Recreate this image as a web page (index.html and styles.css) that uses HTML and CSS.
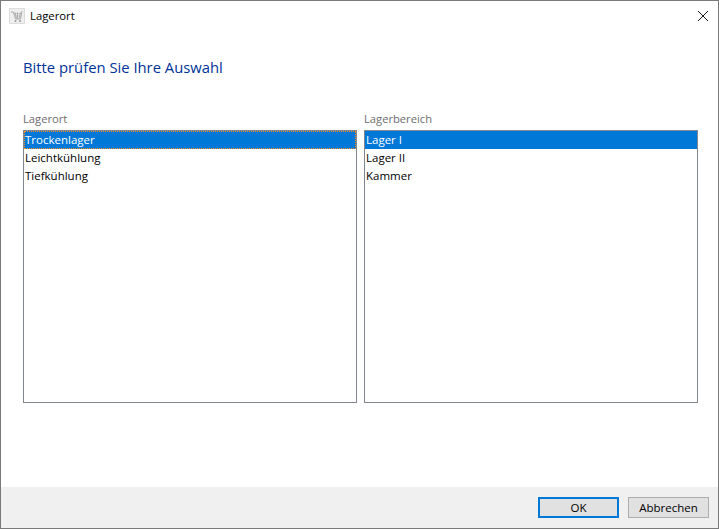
FILE: index.html
```html
<!DOCTYPE html>
<html lang="de">
<head>
<meta charset="utf-8">
<title>Lagerort</title>
<link rel="stylesheet" href="styles.css">
</head>
<body>
<div class="window">
  <header class="titlebar">
    <span class="app-icon">
      <svg width="16" height="16" viewBox="0 0 16 16">
        <rect x="0.5" y="0.5" width="15" height="15" fill="#eeeeee" stroke="#dddddd"/>
        <path d="M2 4h2.500l2 7h5l1.500-8" fill="none" stroke="#a8a8a8" stroke-width="1"/>
        <path d="M4.500 5.500h8M5 8h7.500" stroke="#bcbcbc" stroke-width="0.8"/>
        <path d="M6 4.500l1.500 6M8.500 4.500v6M11.500 4.500l-1.500 6" stroke="#a0a0a0" stroke-width="0.8"/>
        <circle cx="6.500" cy="13" r="1" fill="#999999"/>
        <circle cx="11" cy="13" r="1" fill="#999999"/>
      </svg>
    </span>
    <span class="title">Lagerort</span>
    <span class="close">
      <svg width="10" height="10" viewBox="0 0 10 10"><path d="M0 0L10 10M10 0L0 10" fill="none" stroke="#1a1a1a" stroke-width="1"/></svg>
    </span>
  </header>
  <main class="content">
    <h1 class="heading">Bitte prüfen Sie Ihre Auswahl</h1>
    <div class="columns">
      <section class="column">
        <div class="label">Lagerort</div>
        <ul class="listbox">
          <li class="item selected focused">Trockenlager</li>
          <li class="item">Leichtkühlung</li>
          <li class="item">Tiefkühlung</li>
        </ul>
      </section>
      <section class="column">
        <div class="label">Lagerbereich</div>
        <ul class="listbox">
          <li class="item selected">Lager I</li>
          <li class="item">Lager II</li>
          <li class="item">Kammer</li>
        </ul>
      </section>
    </div>
  </main>
  <footer class="footer">
    <button class="btn default" type="button">OK</button>
    <button class="btn" type="button">Abbrechen</button>
  </footer>
</div>
</body>
</html>
```
FILE: styles.css
```css
* { box-sizing: border-box; }
html, body { margin: 0; height: 100%; }
body { background: #fff; font-family: "Open Sans", "Noto Sans", "Liberation Sans", sans-serif; font-size: 11.5px; color: #000; overflow: hidden; }
.window { width: 719px; height: 529px; border: 1px solid #7a7a7a; display: flex; flex-direction: column; background: #fff; }
.titlebar { height: 29px; display: flex; align-items: center; padding: 0 10px 0 8px; flex: none; }
.app-icon { width: 16px; height: 16px; display: block; margin-right: 5px; }
.app-icon svg { display: block; }
.title { flex: 1; font-size: 11.300px; color: #000; }
.close { width: 10px; height: 10px; display: block; }
.close svg { display: block; }
.content { flex: 1; padding: 25px 20px 0 22px; }
.heading { margin: 0; font-weight: 400; font-size: 14.800px; line-height: 24px; color: #003399; }
.columns { display: flex; gap: 7px; margin-top: 31px; }
.column { width: 334px; }
.label { color: #6d6d6d; font-size: 11.200px; height: 18px; line-height: 18px; margin-bottom: 2px; }
.listbox { list-style: none; margin: 0; padding: 0; height: 273px; border: 1px solid #82878f; background: #fff; }
.item { height: 18px; line-height: 18px; padding-left: 1px; white-space: nowrap; }
.selected { background: #0078d7; color: #fff; }
.focused { outline: 1px dotted #ff8c1a; outline-offset: -1px; }
.footer { height: 41px; flex: none; background: #f0f0f0; display: flex; align-items: center; justify-content: flex-end; gap: 9px; padding: 0 9px 0 0; }
.btn { width: 81px; height: 21px; padding: 0; border: 1px solid #adadad; background: #e1e1e1; font: inherit; color: #000; }
.btn.default { border: 2px solid #0078d7; }
```
